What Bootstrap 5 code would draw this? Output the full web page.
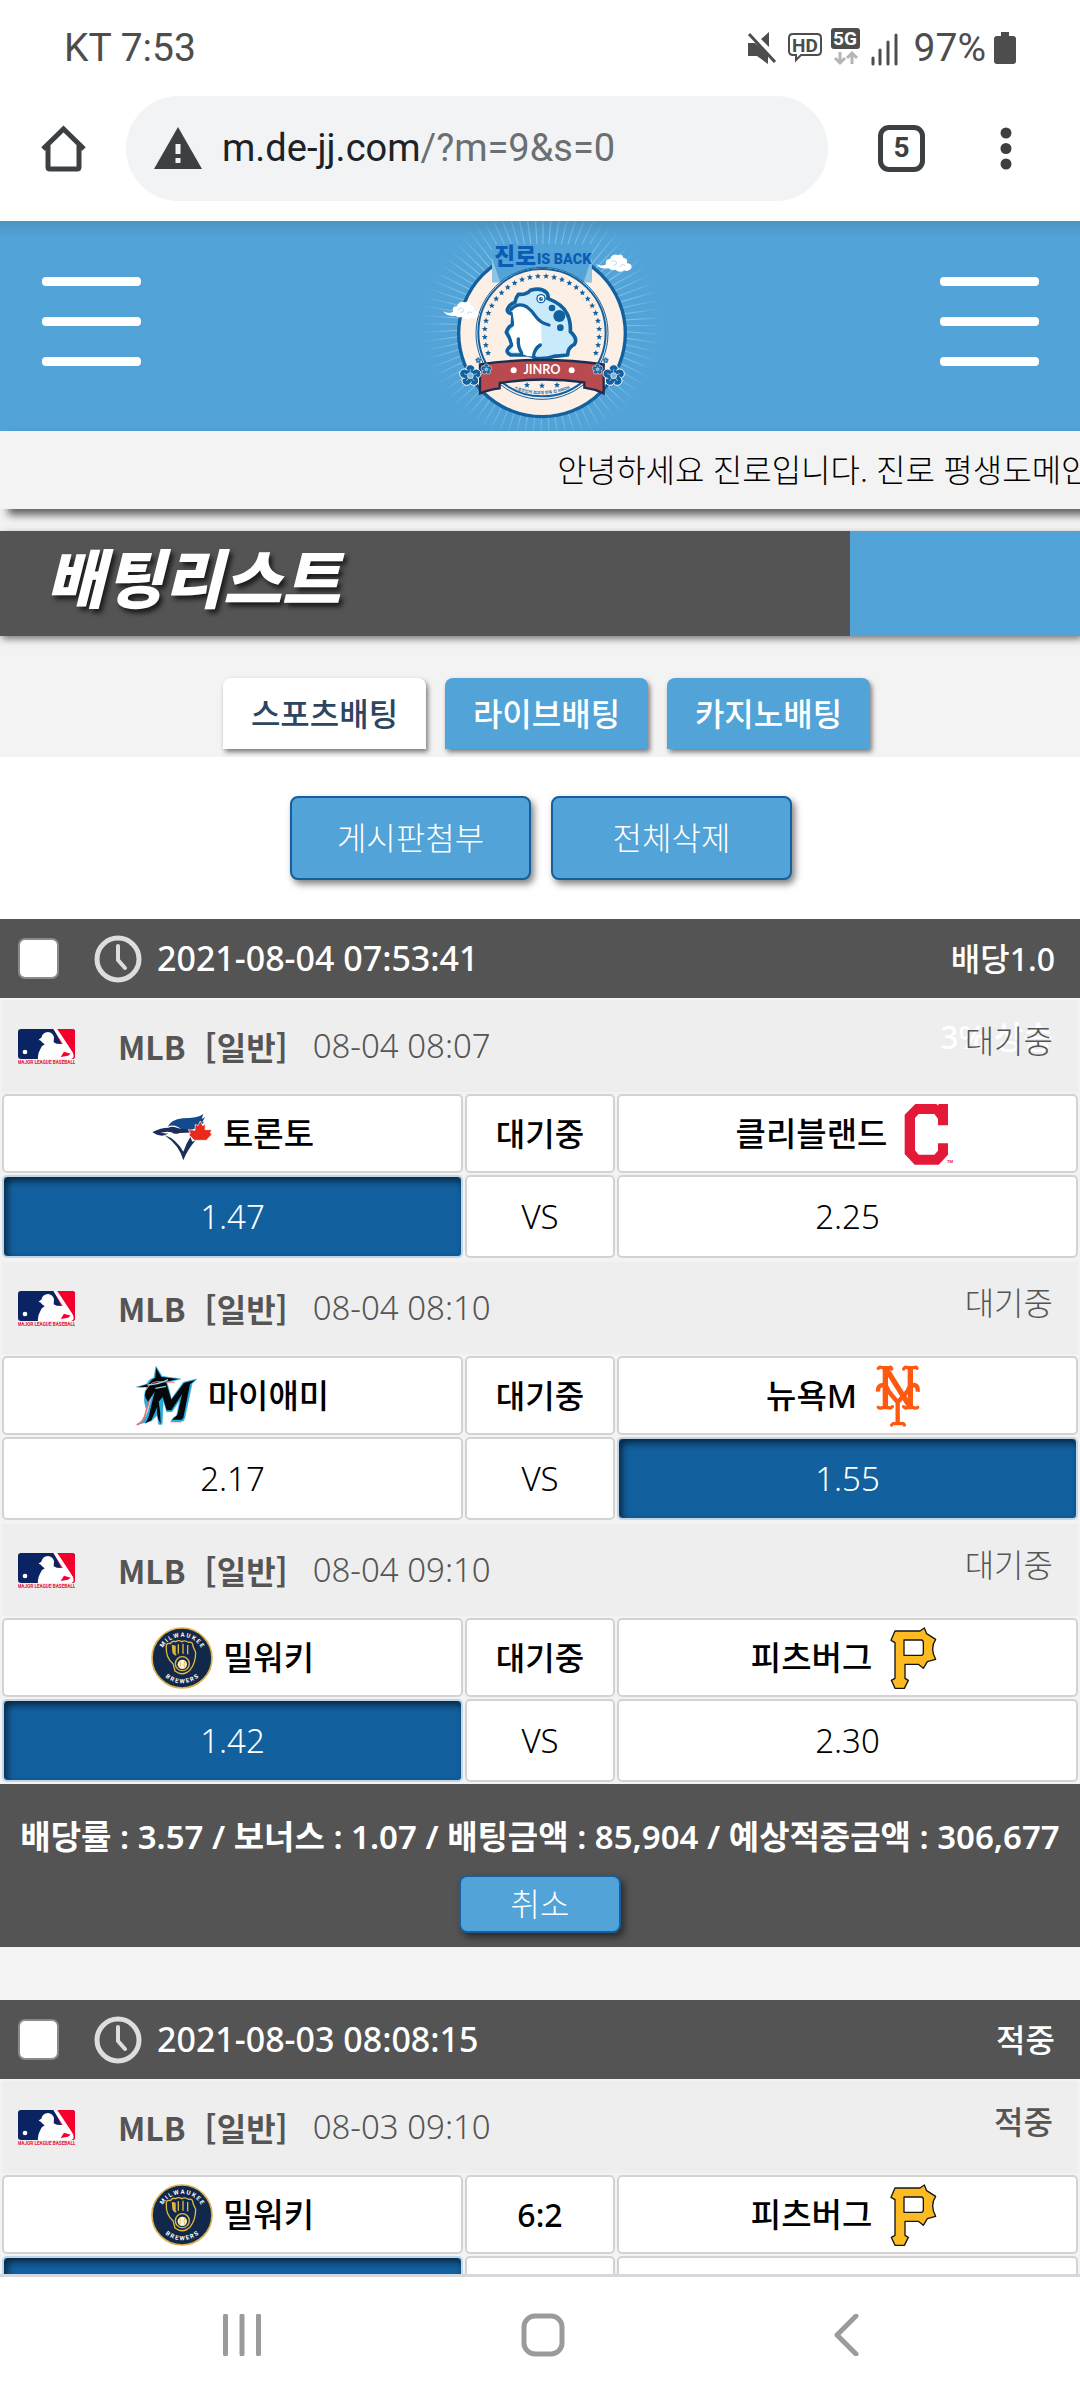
<!DOCTYPE html>
<html lang="ko">
<head>
<meta charset="utf-8">
<meta name="viewport" content="width=device-width, initial-scale=1">
<title>배팅리스트</title>
<link href="https://cdn.jsdelivr.net/npm/bootstrap@5.3.0/dist/css/bootstrap.min.css" rel="stylesheet">
<style>
:root{--sky:#52a3d7;--deep:#12609e;--slate:#545454;--paper:#f3f3f3}
body{font-family:"Noto Sans","Noto Sans CJK KR",sans-serif;font-size:32px;line-height:40px;color:#000;font-weight:300;background:#fff;height:100vh}
svg{display:block;flex:none}
.status{height:95px;padding:0 64px;font:400 39px/40px Roboto,sans-serif;color:#4d4d4d}
.browser{height:126px;padding:0 66px 20px 40px}
.omni{height:105px;margin:0 50px 0 39px;flex:0 1 702px;border-radius:53px;background:#f1f3f4;padding:0 28px;gap:20px}
.omni-text{font:400 38px/44px Roboto,sans-serif;color:#202124}
.omni-text span{color:#6b6f73}
.tabs-count{width:47px;height:47px;border:5px solid #3c4043;border-radius:11px;background:none;font:700 28px/36px Roboto,sans-serif;color:#3c4043;padding:0}
.site-head{height:210px;background:linear-gradient(#4c93c1,var(--sky) 16px);padding:0 41px 0 42px}
.burger{border:0;background:none;padding:0 0 10px;width:99px}
.burger span{display:block;height:9px;border-radius:4px;background:#fff}
.burger span+span{margin-top:31px}
.intro{background:var(--paper)}
.notice{height:78px;background:var(--paper);padding-left:51.6%;overflow:hidden;white-space:nowrap;box-shadow:8px 6px 8px rgba(0,0,0,.6);position:relative}
.title-row{margin-top:22px;height:105px;background:var(--sky);box-shadow:2px 3px 7px rgba(0,0,0,.5)}
.title-row h1{width:78.7%;background:var(--slate);padding:0 0 10px 46px;font-size:64px;line-height:64px;font-weight:900;font-style:italic;color:#fff;text-shadow:3px 4px 5px rgba(0,0,0,.7)}
.tabs{gap:19px;padding:42px 0 8px 13px}
.tabs .btn{width:203px;height:71px;border:0;border-radius:8px 8px 0 0;background:var(--sky);color:#fff;font-size:32px;font-weight:500;padding:0;box-shadow:2px 3px 5px rgba(0,0,0,.5)}
.tabs .btn.active{background:#fff;color:#2c4560}
.tools{gap:20px;padding:39px 0 39px 2px}
.btn-sky{background:var(--sky);border:2px solid #165f9d;border-radius:8px;color:#fff;font-size:32px;font-weight:300;line-height:40px;padding:0;box-shadow:3px 4px 7px rgba(0,0,0,.5)}
.tools .btn{width:241px;height:84px}
.bet-head{height:79px;background:var(--slate);color:#fff;font-weight:500;padding:0 25px 0 18px}
.bet-head .form-check-input{width:41px;height:41px;margin:0 35px 0 0;border:2px solid #8a8a8a;border-radius:7px;background-color:#fff}
.bet-head time{margin-left:15px;font-size:34px}
.match{width:100%;table-layout:fixed;border-collapse:separate;border-spacing:2px;background:var(--paper);text-align:center}
.match .side{width:43%}
.match .league{height:92px;background:#eee;padding:0 25px 0 16px;color:#555;font-weight:300}
.league b{font-family:"Noto Sans CJK KR",sans-serif;font-weight:700}
.league-name{margin-left:43px}
.kind{margin-left:19px}
.league time{font-size:33px;margin-left:25px}
.league .state{margin-bottom:10px;position:relative}
.league .bonus{position:absolute;right:0;top:-4px;color:#fff;font-weight:500;white-space:nowrap}
.league .state span:last-child{position:relative}
.match tbody td,.match tbody th{background:#fff;border:2px solid #d3d3d3;border-radius:5px;padding:0}
.teams td,.teams th{height:79px;font-weight:500}
.team{display:flex;align-items:center;justify-content:center;gap:10px;font-size:33px}
.odds td{height:83px;font-size:33px}
.match tbody .picked{background:var(--deep);border-color:#c4d6e6;color:#fff;box-shadow:inset 3px 4px 7px rgba(0,0,0,.6)}
.bet-foot{height:163px;background:var(--slate);color:#fff;font-size:33px;font-weight:600;padding-top:33px;gap:18px;white-space:nowrap}
.bet-foot .btn{width:162px;height:58px}
.spacer{height:53px;background:var(--paper)}
.sysbar{height:126px;border-top:3px solid #d5d8dd;background:#fff;padding:0 221px 8px 223px}
.plain{border:0;background:none;padding:0}
</style>
</head>
<body class="d-flex flex-column overflow-hidden">

<svg width="0" height="0" class="position-absolute" aria-hidden="true">
  <symbol id="mlb" viewBox="0 0 171 105">
    <rect width="171" height="90" rx="9" fill="#0a2463"/>
    <path d="M108 0H162a9 9 0 0 1 9 9V81a9 9 0 0 1-9 9H150Z" fill="#f5002d"/>
    <path d="M106 0H118L164 70Q172 88 158 90H60Q58 76 66 62 70 50 80 46L72 40Q70 34 62 32 66 28 70 26 74 10 90 9 104 10 108 24L107 40 116 44 134 45Z" fill="#fff"/>
    <path d="M118 0H122L170 78V60Z" fill="#f5002d"/>
    <path d="M138 68L158 74 150 80 128 84Z" fill="#f5002d"/>
    <circle cx="21" cy="69" r="7" fill="#fff"/>
    <text x="85" y="104" text-anchor="middle" font-family="Roboto, sans-serif" font-weight="700" font-size="14" fill="#e8113a">MAJOR LEAGUE BASEBALL</text>
  </symbol>
  <symbol id="clock" viewBox="0 0 48 48">
    <circle cx="24" cy="24" r="21" fill="none" stroke="#ddd" stroke-width="5"/>
    <path d="M24 11V25L31 33" fill="none" stroke="#ddd" stroke-width="4" stroke-linecap="round"/>
  </symbol>
  <symbol id="tor" viewBox="0 0 186 186">
    <path d="M50 71Q60 50 95 46 140 46 157 33L152 48 162 42 154 58 159 57 146 72Q120 84 96 82 70 60 50 71Z" fill="#134a8e"/>
    <path d="M4 87Q30 74 52 74 66 68 82 76L112 80 140 84V88L86 90Q70 96 62 88L48 86 28 89 52 92 34 98Q14 96 4 87Z" fill="#1d2d5c"/>
    <path d="M40 96Q76 108 97 146 104 124 118 102L124 116 134 112Q108 142 97 172 86 128 40 96Z" fill="#1d2d5c"/>
    <path d="M148 54L155 68 163 64 162 80 182 80 178 90 183 94 166 112H130L114 96 118 90 112 80 132 82 133 64 141 68Z" fill="#e8291c" stroke="#fff" stroke-width="2"/>
  </symbol>
  <symbol id="cle" viewBox="0 0 186 186">
    <path d="M55 3H118L124 8V3H153V67H123V47L112 33H65L54 45V142L65 155H112L123 143V121H153V155L125 185H53L23 153V35Z" fill="#e31937"/>
    <text x="150" y="180" font-family="Roboto, sans-serif" font-weight="700" font-size="12" fill="#e31937">TM</text>
  </symbol>
  <symbol id="mia" viewBox="0 0 186 186">
    <path d="M4 178Q26 170 36 140L52 82 30 130Q18 90 34 66L2 66 32 58Q38 42 54 38L60 4 78 34 134 42 92 52 98 70 106 102 142 52 182 42 168 56 146 160 142 168H106L112 158 122 152 132 104 108 140 92 140 82 104 78 178H68L64 150 46 168Z" fill="#27a9dc" stroke="#27a9dc" stroke-width="2"/>
    <path d="M2 180Q24 172 30 140L42 100" fill="none" stroke="#ef6b70" stroke-width="5"/>
    <path d="M104 170H136" stroke="#ef6b70" stroke-width="4"/>
    <path d="M26 176Q38 164 42 138L56 80 36 110Q18 90 36 66L6 67 38 56Q44 44 58 38L60 8 76 36 128 42 90 50 106 104 144 54 178 45 162 58 142 158 136 164H108L124 150 138 88 106 136H92L80 96 68 110Q74 140 74 176 60 156 64 126L46 166Z" fill="#050708"/>
    <path d="M30 76Q44 46 74 50L116 52" fill="none" stroke="#ef6b70" stroke-width="3"/>
    <path d="M34 60Q70 58 96 44M58 70L90 64" fill="none" stroke="#8dd5ec" stroke-width="4"/>
  </symbol>
  <symbol id="nym" viewBox="0 0 186 186">
    <g fill="none" stroke="#ff5910" stroke-linejoin="round">
      <path d="M55 6V132M130 6V132" stroke-width="16"/>
      <path d="M58 12L128 124" stroke-width="16"/>
      <path d="M33 80Q32 60 48 60 60 62 64 78L92 112 122 78Q128 60 142 60 154 62 152 80M92 108V178" stroke-width="13"/>
      <path d="M34 10Q38 4 46 8H66Q72 4 74 12M110 12Q114 4 120 8H140Q148 4 150 10M34 127Q38 131 46 128H66Q72 131 76 125M110 125Q114 131 120 128H140Q148 131 152 127M74 180Q78 173 84 176H102Q110 173 112 180" stroke-width="10" stroke-linecap="round"/>
    </g>
  </symbol>
  <symbol id="mil" viewBox="0 0 186 186">
    <circle cx="93" cy="93" r="90" fill="#12284b" stroke="#d9b24c" stroke-width="5"/>
    <path d="M46 62Q44 46 58 50Q64 40 74 44Q84 38 92 44Q102 38 112 46Q126 42 126 58L134 76Q134 108 118 128Q96 150 72 132L66 110Q44 92 46 62Z" fill="none" stroke="#e0b840" stroke-width="4"/>
    <path d="M66 54V74Q70 86 76 82M82 52V80M96 50V80M110 54V82" fill="none" stroke="#e0b840" stroke-width="4"/>
    <path d="M62 54L74 56V86L66 78Z" fill="#e0b840"/>
    <circle cx="94" cy="110" r="21" fill="#12284b" stroke="#e0b840" stroke-width="4"/>
    <circle cx="94" cy="112" r="14" fill="#fbf3d0"/>
    <path d="M86 102Q92 112 86 122M102 102Q96 112 102 122" fill="none" stroke="#c8a040" stroke-width="2"/>
    <path id="arcTop" d="M28 84A66 66 0 0 1 158 84" fill="none"/>
    <path id="arcLow" d="M20 116A77 77 0 0 0 166 116" fill="none"/>
    <g font-family="Roboto, sans-serif" font-weight="700" font-size="18" fill="#fff" text-anchor="middle">
      <text><textPath href="#arcTop" startOffset="50%">M I L W A U K E E</textPath></text>
      <text><textPath href="#arcLow" startOffset="50%">B R E W E R S</textPath></text>
    </g>
  </symbol>
  <symbol id="pit" viewBox="0 0 186 186">
    <path fill-rule="evenodd" d="M39 12H114L127 3L134 20L161 37Q143 64 161 97L136 104L124 124L109 112H69V154L79 160L67 184H39L28 160L39 154V47L27 40ZM66 39V85H118Q124 84 124 77V47Q124 40 118 39Z" fill="#fdbb22" stroke="#151515" stroke-width="4" stroke-linejoin="round"/>
  </symbol>
</svg>

<header class="bg-white flex-shrink-0">
  <div class="status d-flex justify-content-between align-items-center">
    <span>KT 7:53</span>
    <span class="d-flex align-items-center">
      <svg width="153" height="40" viewBox="0 0 153 40" class="me-3" role="img" aria-label="무음, HD, 5G, 신호">
        <g fill="#4d4d4d" transform="translate(2 -1)">
          <path d="M1 16H8L21 27V37L10 29H1ZM14 12L22 5V20Z"/>
          <path d="M2 7L28 35" stroke="#4d4d4d" stroke-width="3"/>
          <rect x="84" y="1" width="29" height="21" rx="3"/>
          <path d="M126 31V37M133 23V37M141 15V37M149 8V37" stroke="#4d4d4d" stroke-width="3" stroke-linecap="round"/>
        </g>
        <path d="M49 6H72Q76 6 76 10V23Q76 27 72 27H56L51 32V27H48Q44 27 44 23V10Q44 6 48 6Z" fill="none" stroke="#4d4d4d" stroke-width="2"/>
        <text x="60" y="24" text-anchor="middle" font-family="Roboto, sans-serif" font-weight="700" font-size="19" fill="#4d4d4d">HD</text>
        <text x="100" y="17" text-anchor="middle" font-family="Roboto, sans-serif" font-weight="700" font-size="19" fill="#fff">5G</text>
        <path d="M95 24V35M90 30L95 35 100 30M107 36V25M102 30L107 25 112 30" fill="none" stroke="#b5b5b5" stroke-width="3"/>
      </svg>
      <span>97%</span>
      <svg width="22" height="32" viewBox="0 0 22 32" class="ms-2" aria-hidden="true"><path d="M7 0H15V4H19Q22 4 22 7V29Q22 32 19 32H3Q0 32 0 29V7Q0 4 3 4H7Z" fill="#4d4d4d"/></svg>
    </span>
  </div>
  <div class="browser d-flex align-items-center">
    <button class="plain" aria-label="홈"><svg width="47" height="47" viewBox="0 0 47 47"><path d="M3 24L23.500 4 44 24M8 20V42Q8 44 10 44H37Q39 44 39 42V20" fill="none" stroke="#3c4043" stroke-width="5"/></svg></button>
    <div class="omni d-flex align-items-center">
      <svg width="48" height="42" viewBox="0 0 48 42" aria-hidden="true"><path d="M24 0L48 42H0Z" fill="#3c4043"/><path d="M24 17V27M24 31V36" stroke="#f1f3f4" stroke-width="5"/></svg>
      <a class="omni-text text-decoration-none" href="#">m.de-jj.com<span>/?m=9&amp;s=0</span></a>
    </div>
    <button class="tabs-count" aria-label="탭">5</button>
    <button class="plain ms-auto" aria-label="메뉴"><svg width="16" height="47" viewBox="0 0 16 47"><g fill="#3c4043"><circle cx="8" cy="8" r="5.500"/><circle cx="8" cy="23.500" r="5.500"/><circle cx="8" cy="39" r="5.500"/></g></svg></button>
  </div>
</header>

<main class="flex-grow-1 overflow-hidden">
  <div class="site-head d-flex justify-content-between align-items-center">
    <button class="burger" aria-label="왼쪽 메뉴"><span></span><span></span><span></span></button>
    <svg width="280" height="210" viewBox="0 18 840 630" role="img" aria-label="진로 IS BACK">
      <defs>
        <radialGradient id="fade" gradientUnits="userSpaceOnUse" cx="423" cy="330" r="360">
          <stop offset=".55" stop-color="#a8d4ee"/><stop offset="1" stop-color="#a8d4ee" stop-opacity="0"/>
        </radialGradient>
        <path id="star" d="M0-9L2.600-3 9-2.800 4 1.500 5.600 8 0 4.400-5.600 8-4 1.500-9-2.800-2.600-3Z" fill="#12609e"/>
        <g id="flower"><g fill="#12609e" stroke="#fff" stroke-width="3"><circle cx="0" cy="-19" r="14"/><circle cx="18" cy="-6" r="14"/><circle cx="11" cy="15" r="14"/><circle cx="-11" cy="15" r="14"/><circle cx="-18" cy="-6" r="14"/></g><circle r="18" fill="#12609e"/><circle r="9" fill="#7db8dc" stroke="#fff" stroke-width="2"/><g stroke="#cfe6f4" stroke-width="2"><path d="M0-10V-20M10-3L19-6M6 8L12 16M-6 8L-12 16M-10-3L-19-6"/></g></g>
        <g id="cloud"><path d="M0 32Q16 42 30 34 26 18 42 18 48 0 66 6 78 0 82 14 98 18 92 30 110 32 106 46 98 58 84 52 74 62 58 50 44 54 38 46 12 50 0 32Z" fill="#fff"/><path d="M44 30Q54 18 62 28 62 38 52 36M72 42Q78 30 88 38" fill="none" stroke="#bcdcf0" stroke-width="3"/></g>
      </defs>
      <circle cx="423" cy="330" r="200" fill="none" stroke="url(#fade)" stroke-width="320" pathLength="840" stroke-dasharray="1.500 8.500"/>
      <circle cx="423" cy="355" r="250" fill="#fbefe6" stroke="#12609e" stroke-width="10"/>
      <path d="M273 88H572V202H273Z" fill="#52a3d7"/>
      <path d="M572 130V202H548ZM273 130V202H298Z" fill="#8cc4e6"/>
      <circle cx="423" cy="355" r="198" fill="#fbefe6" stroke="#12609e" stroke-width="3"/>
      <circle cx="423" cy="353" r="191" fill="none" stroke="#12609e" stroke-width="6"/>
      <g fill="#0a5cb5" font-weight="900">
        <text x="280" y="148" font-family="'Noto Sans CJK KR', sans-serif" font-size="68">진로</text>
        <text x="408" y="146" font-family="Roboto, sans-serif" font-size="43">IS BACK</text>
      </g>
      <g id="starRing"></g>
      <path d="M352 238Q376 240 388 226 420 216 436 232 444 240 440 250 486 268 498 296 510 320 508 350 532 372 520 388 500 398 500 420L458 424Q440 432 404 430 392 420 376 420H330Q312 412 322 400L332 390Q328 368 316 352 322 334 334 330L336 298Q312 292 322 278 328 266 342 262 344 248 352 238Z" fill="#c8eafb" stroke="#12609e" stroke-width="11" stroke-linejoin="round"/>
      <path d="M334 286Q360 262 384 286 398 300 420 320L422 384Q404 396 394 424H380L366 418 354 380Q358 412 346 412L330 408 338 392 326 352 340 330Z" fill="#fff"/>
      <path d="M330 284Q352 260 378 276 392 286 404 304 418 324 444 330M352 372Q350 396 362 414M418 390Q402 400 398 420" fill="none" stroke="#12609e" stroke-width="10" stroke-linecap="round"/>
      <circle cx="420" cy="251" r="14" fill="#12609e"/><circle cx="420" cy="251" r="10" fill="#fff"/><circle cx="420" cy="252" r="6" fill="#12609e"/><circle cx="422" cy="250" r="2" fill="#fff"/>
      <circle cx="475" cy="303" r="18" fill="#12609e"/><circle cx="453" cy="279" r="10" fill="#12609e"/><circle cx="478" cy="338" r="10" fill="#12609e"/>
      <path d="M237 448Q420 422 608 448V535Q580 522 550 518V502Q424 484 296 504V520Q262 524 237 535Z" fill="#b84a50" stroke="#1d2d4e" stroke-width="7"/>
      <circle cx="338" cy="466" r="9" fill="#fff"/><circle cx="512" cy="466" r="9" fill="#fff"/>
      <text x="423" y="477" text-anchor="middle" font-family="Lato, sans-serif" font-weight="700" font-size="38" fill="#fff">JINRO</text>
      <use href="#star" x="378" y="510"/><use href="#star" x="423" y="512"/><use href="#star" x="468" y="510"/>
      <path id="motto" d="M334 520Q423 556 512 518" fill="none"/>
      <text font-family="'Noto Sans CJK KR', sans-serif" font-weight="700" font-size="12" fill="#12609e" text-anchor="middle"><textPath href="#motto" startOffset="50%">스포츠인의 최고의 만족 진 AWON</textPath></text>
      <use href="#flower" transform="translate(208 482)"/><use href="#flower" transform="translate(638 482)"/>
      <use href="#flower" transform="translate(256 463) scale(.5)"/><use href="#flower" transform="translate(590 463) scale(.5)"/>
      <use href="#flower" transform="translate(232 436) scale(.28)"/><use href="#flower" transform="translate(614 436) scale(.28)"/>
      <use href="#cloud" transform="translate(585 114)"/><use href="#cloud" transform="translate(126 256)"/>
    </svg>
    <button class="burger" aria-label="오른쪽 메뉴"><span></span><span></span><span></span></button>
  </div>

  <div class="intro">
    <div class="notice d-flex align-items-center">안녕하세요 진로입니다. 진로 평생도메인 안내</div>
    <div class="title-row"><h1 class="h-100 m-0 d-flex align-items-center">배팅리스트</h1></div>
    <nav class="tabs d-flex justify-content-center">
      <button class="btn active">스포츠배팅</button>
      <button class="btn">라이브배팅</button>
      <button class="btn">카지노배팅</button>
    </nav>
  </div>

  <div class="tools d-flex justify-content-center">
    <button class="btn btn-sky">게시판첨부</button>
    <button class="btn btn-sky">전체삭제</button>
  </div>

  <section>
    <div class="bet-head d-flex align-items-center">
      <input class="form-check-input" type="checkbox" id="bet1" aria-label="배팅 선택">
      <svg width="48" height="48" aria-hidden="true"><use href="#clock"/></svg>
      <label for="bet1"><time>2021-08-04 07:53:41</time></label>
      <span class="ms-auto">배당1.0</span>
    </div>
    <table class="match">
      <colgroup><col class="side"><col><col class="side"></colgroup>
      <thead><tr><th class="league" colspan="3"><div class="d-flex align-items-center">
        <svg width="57" height="35" aria-hidden="true"><use href="#mlb"/></svg>
        <b class="league-name">MLB</b><b class="kind">[일반]</b><time>08-04 08:07</time>
        <span class="state ms-auto"><span class="bonus">3% 상승</span><span>대기중</span></span></div></th></tr></thead>
      <tbody>
        <tr class="teams"><th><div class="team"><svg width="62" height="62" aria-hidden="true"><use href="#tor"/></svg>토론토</div></th><td>대기중</td><th><div class="team">클리블랜드<svg width="62" height="62" aria-hidden="true"><use href="#cle"/></svg></div></th></tr>
        <tr class="odds"><td class="picked">1.47</td><td>VS</td><td>2.25</td></tr>
      </tbody>
    </table>
    <table class="match">
      <colgroup><col class="side"><col><col class="side"></colgroup>
      <thead><tr><th class="league" colspan="3"><div class="d-flex align-items-center">
        <svg width="57" height="35" aria-hidden="true"><use href="#mlb"/></svg>
        <b class="league-name">MLB</b><b class="kind">[일반]</b><time>08-04 08:10</time>
        <span class="state ms-auto">대기중</span></div></th></tr></thead>
      <tbody>
        <tr class="teams"><th><div class="team"><svg width="62" height="62" aria-hidden="true"><use href="#mia"/></svg>마이애미</div></th><td>대기중</td><th><div class="team">뉴욕M<svg width="62" height="62" aria-hidden="true"><use href="#nym"/></svg></div></th></tr>
        <tr class="odds"><td>2.17</td><td>VS</td><td class="picked">1.55</td></tr>
      </tbody>
    </table>
    <table class="match">
      <colgroup><col class="side"><col><col class="side"></colgroup>
      <thead><tr><th class="league" colspan="3"><div class="d-flex align-items-center">
        <svg width="57" height="35" aria-hidden="true"><use href="#mlb"/></svg>
        <b class="league-name">MLB</b><b class="kind">[일반]</b><time>08-04 09:10</time>
        <span class="state ms-auto">대기중</span></div></th></tr></thead>
      <tbody>
        <tr class="teams"><th><div class="team"><svg width="62" height="62" aria-hidden="true"><use href="#mil"/></svg>밀워키</div></th><td>대기중</td><th><div class="team">피츠버그<svg width="62" height="62" aria-hidden="true"><use href="#pit"/></svg></div></th></tr>
        <tr class="odds"><td class="picked">1.42</td><td>VS</td><td>2.30</td></tr>
      </tbody>
    </table>
    <div class="bet-foot d-flex flex-column align-items-center">
      <div>배당률 : 3.57 / 보너스 : 1.07 / 배팅금액 : 85,904 / 예상적중금액 : 306,677</div>
      <button class="btn btn-sky">취소</button>
    </div>
  </section>
  <div class="spacer"></div>
  <section>
    <div class="bet-head d-flex align-items-center">
      <input class="form-check-input" type="checkbox" id="bet2" aria-label="배팅 선택">
      <svg width="48" height="48" aria-hidden="true"><use href="#clock"/></svg>
      <label for="bet2"><time>2021-08-03 08:08:15</time></label>
      <span class="ms-auto">적중</span>
    </div>
    <table class="match">
      <colgroup><col class="side"><col><col class="side"></colgroup>
      <thead><tr><th class="league" colspan="3"><div class="d-flex align-items-center">
        <svg width="57" height="35" aria-hidden="true"><use href="#mlb"/></svg>
        <b class="league-name">MLB</b><b class="kind">[일반]</b><time>08-03 09:10</time>
        <span class="state ms-auto fw-medium">적중</span></div></th></tr></thead>
      <tbody>
        <tr class="teams"><th><div class="team"><svg width="62" height="62" aria-hidden="true"><use href="#mil"/></svg>밀워키</div></th><td>6:2</td><th><div class="team">피츠버그<svg width="62" height="62" aria-hidden="true"><use href="#pit"/></svg></div></th></tr>
        <tr class="odds"><td class="picked"></td><td></td><td></td></tr>
      </tbody>
    </table>
  </section>
</main>

<footer class="sysbar d-flex justify-content-between align-items-center flex-shrink-0">
  <button class="plain" aria-label="최근 앱"><svg width="38" height="42" viewBox="0 0 38 42"><path d="M2.500 2V40M19 2V40M35.500 2V40" stroke="#9b9b9b" stroke-width="5" stroke-linecap="round"/></svg></button>
  <button class="plain" aria-label="홈 화면"><svg width="53" height="44" viewBox="0 0 53 44"><rect x="3" y="3" width="38" height="38" rx="11" fill="none" stroke="#9b9b9b" stroke-width="5"/></svg></button>
  <button class="plain" aria-label="뒤로"><svg width="25" height="42" viewBox="0 0 25 42"><path d="M22 2L3 21 22 40" fill="none" stroke="#9b9b9b" stroke-width="5" stroke-linecap="round" stroke-linejoin="round"/></svg></button>
</footer>

<script>
  // ring of stars around the mascot
  const ring = document.getElementById('starRing');
  for (let a = -200; a <= 20; a += 8.148) {
    const s = document.createElementNS('http://www.w3.org/2000/svg', 'use');
    s.setAttribute('href', '#star');
    s.setAttribute('x', 423 + 172 * Math.cos(a * Math.PI / 180));
    s.setAttribute('y', 355 + 172 * Math.sin(a * Math.PI / 180));
    ring.appendChild(s);
  }
</script>
<script src="https://cdn.jsdelivr.net/npm/bootstrap@5.3.0/dist/js/bootstrap.bundle.min.js"></script>
</body>
</html>
